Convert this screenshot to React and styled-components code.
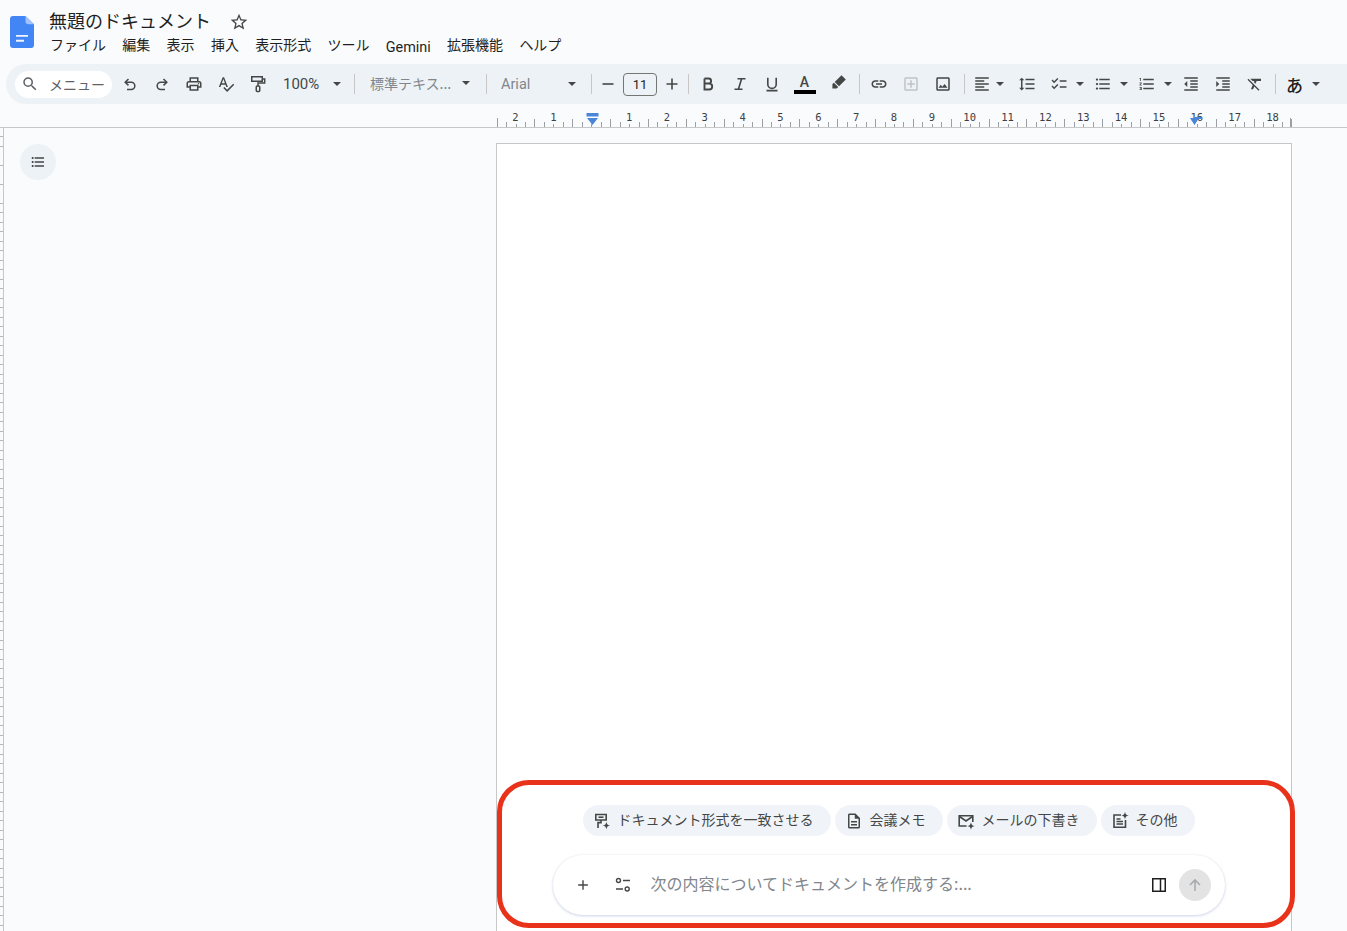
import React from 'react';
import styled, { createGlobalStyle } from 'styled-components';
import {
  MdSearch, MdStarBorder, MdOutlinePrint, MdSpellcheck,
  MdOutlineAddBox, MdOutlineImage, MdFormatAlignLeft, MdFormatLineSpacing, MdOutlineChecklist,
  MdFormatListBulleted, MdFormatListNumbered, MdFormatIndentDecrease, MdFormatIndentIncrease,
  MdFormatClear, MdOutlineDescription, MdOutlineLink,
} from 'react-icons/md';

const JP = `"Noto Sans CJK JP", "Noto Sans", sans-serif`;
const INK = '#444746';

const GlobalStyle = createGlobalStyle`
  html, body { margin: 0; padding: 0; height: 100%; overflow: hidden; }
  body { background: #f9fbfd; font-family: Roboto, ${JP}; color: #1f1f1f; }
`;

const Shell = styled.div`
  height: 931px;
  display: flex;
  flex-direction: column;
  overflow: hidden;
`;

const Header = styled.header`
  height: 64px;
  display: flex;
  padding-left: 10px;
  box-sizing: border-box;
`;

const LogoBox = styled.div`
  width: 27px;
  padding-top: 16px;
`;

const TitleBlock = styled.div`
  margin-left: 12px;
  padding-top: 7px;
`;

const TitleRow = styled.div`
  display: flex;
  align-items: center;
  height: 26px;
  color: ${INK};
  svg { margin-top: 3px; }
`;

const Title = styled.span`
  font-family: ${JP};
  font-size: 18px;
  line-height: 26px;
  color: #1f1f1f;
  margin-right: 18px;
`;

const MenuBar = styled.nav`
  display: flex;
  gap: 16.3px;
  padding-left: 1px;
`;

const MenuItem = styled.span`
  font-family: ${(p) => (p.$latin ? 'Roboto, sans-serif' : JP)};
  font-size: ${(p) => (p.$latin ? '14.4px' : '14px')};
  line-height: 22px;
  color: #1f1f1f;
  position: relative;
  top: ${(p) => (p.$latin ? '4px' : '0')};
`;

const Toolbar = styled.div`
  height: 40px;
  margin-left: 6px;
  border-radius: 20px 0 0 20px;
  background: #edf2f6;
  display: flex;
  align-items: center;
  padding-left: 9px;
  color: ${INK};
`;

const SearchPill = styled.div`
  width: 97px;
  height: 27px;
  border-radius: 14px;
  background: #fff;
  display: flex;
  align-items: center;
  padding: 0 0 1px 6px;
  box-sizing: border-box;
  margin-right: 2px;
  font-family: ${JP};
  font-size: 14px;
  color: #5f6368;
  gap: 10px;
  flex: none;
  white-space: nowrap;
  overflow: hidden;
  svg { margin-top: 1px; }
`;

const ToolButton = styled.div`
  width: ${(p) => p.$w || 32}px;
  height: 28px;
  flex: none;
  box-sizing: border-box;
  padding-bottom: ${(p) => p.$pb || 0}px;
  display: flex;
  align-items: center;
  justify-content: center;
  color: ${(p) => (p.$muted ? '#c0c4c7' : INK)};
`;

const Caret = styled.span`
  width: 0;
  height: 0;
  border-left: 4.5px solid transparent;
  border-right: 4.5px solid transparent;
  border-top: 4.5px solid ${INK};
  flex: none;
`;

const Separator = styled.span`
  width: 1px;
  height: 20px;
  background: #c7c7c7;
  flex: none;
  margin-left: ${(p) => p.$ml ?? 0}px;
  margin-right: ${(p) => p.$mr ?? 0}px;
`;

const SelectBox = styled.div`
  width: ${(p) => p.$w}px;
  height: 28px;
  flex: none;
  display: flex;
  align-items: center;
  justify-content: space-between;
  box-sizing: border-box;
  padding: 0 ${(p) => p.$pr ?? 8}px ${(p) => (p.$jp ? 2 : 0)}px ${(p) => p.$pl ?? 8}px;
  font-family: ${(p) => (p.$jp ? JP : 'Roboto, sans-serif')};
  font-size: ${(p) => p.$fs || 14}px;
  white-space: nowrap;
  color: ${(p) => (p.$muted ? '#80868b' : INK)};
`;

const FontSize = styled.div`
  width: 34px;
  height: 23px;
  flex: none;
  box-sizing: border-box;
  border: 1px solid #747775;
  border-radius: 4px;
  font-size: 13px;
  display: flex;
  align-items: center;
  justify-content: center;
  color: #1f1f1f;
`;

const MiniGroup = styled.div`
  display: flex;
  align-items: center;
  width: 44px;
  box-sizing: border-box;
  padding-left: 7px;
  gap: ${(p) => p.$gap ?? 7.5}px;
  flex: none;
`;

const ColorA = styled.div`
  width: 33px;
  height: 28px;
  margin-right: 2px;
  padding-top: 4px;
  box-sizing: border-box;
  flex: none;
  display: flex;
  flex-direction: column;
  align-items: center;
  font-size: 14px;
  line-height: 16px;
  font-weight: 500;
  color: ${INK};
  span:last-child {
    width: 22px;
    height: 4px;
    background: #000;
  }
`;

const Kana = styled.span`
  font-family: ${JP};
  font-size: 17px;
  font-weight: 500;
  width: 18px;
  color: #1f1f1f;
`;

const RulerBar = styled.div`
  height: 24px;
  flex: none;
  border-bottom: 1px solid #c7c7c7;
  box-sizing: border-box;
  svg { display: block; }
`;

const Workspace = styled.main`
  flex: 1;
  display: flex;
  min-height: 0;
`;

const SideRuler = styled.div`
  width: 3px;
  flex: none;
  border-right: 1px solid #c7c7c7;
  background: repeating-linear-gradient(to bottom, transparent 0 8.5px, #b8b8b8 8.5px 9.5px);
`;

const Sidebar = styled.aside`
  width: 492px;
  flex: none;
  padding: 16px 0 0 16px;
  box-sizing: border-box;
`;

const OutlineButton = styled.div`
  width: 36px;
  height: 36px;
  border-radius: 50%;
  background: #edf2f6;
  display: flex;
  align-items: center;
  justify-content: center;
  color: ${INK};
`;

const PageWrap = styled.div`
  padding-top: 15px;
  display: flex;
`;

const Page = styled.section`
  width: 796px;
  height: 800px;
  box-sizing: border-box;
  background: #fff;
  border: 1px solid #c7c7c7;
  border-bottom: none;
  display: flex;
  flex-direction: column;
  align-items: center;
  position: relative;
  padding: 661px 11px 0 0;
`;

const Annotation = styled.div`
  position: absolute;
  left: 0;
  top: 636px;
  width: 798px;
  height: 148px;
  box-sizing: border-box;
  border: 5px solid #e8321a;
  border-radius: 32px;
  pointer-events: none;
`;

const ChipRow = styled.div`
  display: flex;
  gap: 4px;
  height: 31px;
`;

const Chip = styled.div`
  height: 31px;
  border-radius: 16px;
  background: #f0f4f9;
  display: flex;
  align-items: center;
  box-sizing: border-box;
  padding: 0 17px 3px 10px;
  gap: 7px;
  font-family: ${JP};
  font-size: 14px;
  color: ${INK};
  svg { margin-top: 4px; }
`;

const Composer = styled.div`
  width: 672px;
  height: 60px;
  margin-top: 19px;
  border-radius: 30px;
  background: #fff;
  box-shadow: 0 1px 3px rgba(90, 110, 180, 0.28), 0 0 2px rgba(60, 64, 67, 0.08);
  display: flex;
  align-items: center;
  box-sizing: border-box;
  padding: 0 14px 0 18px;
  color: ${INK};
`;

const ComposerIcon = styled.div`
  width: 24px;
  height: 24px;
  display: flex;
  align-items: center;
  justify-content: center;
  flex: none;
  margin-right: ${(p) => p.$mr || 0}px;
`;

const Placeholder = styled.div`
  flex: 1;
  font-family: ${JP};
  font-size: 16px;
  padding-bottom: 5px;
  color: #80868b;
`;

const SendButton = styled.div`
  width: 32px;
  height: 32px;
  border-radius: 50%;
  background: #e3e3e3;
  display: flex;
  align-items: center;
  justify-content: center;
  margin-left: 8px;
  flex: none;
`;

const DocsLogo = () => (
  <svg width="24" height="32" viewBox="0 0 24 33" preserveAspectRatio="none">
    <path d="M3 0h12.5L24 8.5V30a3 3 0 0 1-3 3H3a3 3 0 0 1-3-3V3a3 3 0 0 1 3-3z" fill="#4285f4" />
    <path d="M15.5 0L24 8.5h-6a2.5 2.5 0 0 1-2.5-2.5z" fill="#a1c2fa" />
    <path d="M6 19.5h12v2H6zM6 24.5h8v2H6z" fill="#f1f5fe" />
  </svg>
);

const UndoIcon = ({ flip }) => (
  <svg width="18" height="18" viewBox="0 0 18 18" fill="none" stroke="currentColor" strokeWidth="1.5"
    style={flip ? { transform: 'scaleX(-1)' } : undefined}>
    <path d="M7.5 4L4.2 7.2l3.3 3.2" />
    <path d="M4.5 7.2h5.7a3.6 3.6 0 0 1 0 7.3H6" />
  </svg>
);

const PaintIcon = () => (
  <svg width="18" height="18" viewBox="0 0 18 18" fill="none" stroke="currentColor" strokeWidth="1.5">
    <rect x="2.75" y="1.75" width="10.5" height="4.5" />
    <path d="M13.5 4h2.2v4H9v3" />
    <rect x="7.25" y="11" width="3.5" height="5.5" rx="1" />
  </svg>
);

const BoldIcon = () => (
  <svg width="18" height="18" viewBox="0 0 18 18" fill="none" stroke="currentColor" strokeWidth="1.9">
    <path d="M5.5 3.5v11h4.7a3 3 0 0 0 0-6H5.5M9.6 8.5a2.5 2.5 0 0 0 0-5H5.5" />
  </svg>
);

const ItalicIcon = () => (
  <svg width="18" height="18" viewBox="0 0 18 18" fill="none" stroke="currentColor" strokeWidth="1.6">
    <path d="M6.5 3.8h8M3.5 14.2h8M10.6 3.8L7.4 14.2" />
  </svg>
);

const UnderlineIcon = () => (
  <svg width="18" height="18" viewBox="0 0 18 18" fill="none" stroke="currentColor" strokeWidth="1.6">
    <path d="M4.8 2.8v6.4a4.2 4.2 0 0 0 8.4 0V2.8M3.5 15.6h11" />
  </svg>
);

const HighlightIcon = () => (
  <svg width="18" height="18" viewBox="0 0 18 18" fill="currentColor">
    <path d="M11.5 2.2l4.3 4.3-6.8 6.8-4.3-4.3zM3.9 9.8l4.3 4.3-1.6 1.4H2.4V11z" />
  </svg>
);

const TuneIcon = () => (
  <svg width="18" height="18" viewBox="0 0 18 18" fill="none" stroke="currentColor" strokeWidth="1.4">
    <circle cx="4.5" cy="4.5" r="2" />
    <path d="M9 4.5h7M2 13h7" />
    <circle cx="13.2" cy="13" r="2" />
  </svg>
);

const PanelIcon = () => (
  <svg width="18" height="18" viewBox="0 0 18 18" fill="none" stroke="#1f1f1f" strokeWidth="1.5">
    <rect x="2.75" y="2.75" width="12.5" height="12.5" />
    <path d="M10.5 3v12" />
  </svg>
);

const ArrowUp = () => (
  <svg width="16" height="16" viewBox="0 0 16 16" fill="none" stroke="#a8abad" strokeWidth="1.6">
    <path d="M8 14V3M3 8l5-5 5 5" />
  </svg>
);

const PlusIcon = ({ size = 16, width = 1.6 }) => (
  <svg width={size} height={size} viewBox="0 0 16 16" fill="none" stroke="currentColor" strokeWidth={width}>
    <path d="M8 2.5v11M2.5 8h11" />
  </svg>
);

const MinusIcon = () => (
  <svg width="16" height="16" viewBox="0 0 16 16" fill="none" stroke="currentColor" strokeWidth="1.6">
    <path d="M2.5 8h11" />
  </svg>
);

const Sparkle = ({ x, y }) => (
  <path transform={`translate(${x} ${y})`} d="M0-3.8C.4-1.3 1.3-.4 3.8 0 1.3.4.4 1.3 0 3.8-.4 1.3-1.3.4-3.8 0-1.3-.4-.4-1.3 0-3.8z" fill="currentColor" stroke="none" />
);

const MatchFormatIcon = () => (
  <svg width="18" height="18" viewBox="0 0 18 18" fill="none" stroke="currentColor" strokeWidth="1.6">
    <path d="M2.8 2.5h10.4v5.5H2.8zM8 8v2.6H5v5.4" />
    <path d="M5.5 5.2h5" />
    <Sparkle x={13.4} y={13.6} />
  </svg>
);

const MailIcon = () => (
  <svg width="18" height="18" viewBox="0 0 18 18" fill="none" stroke="currentColor" strokeWidth="1.6">
    <path d="M9.5 14H2.2V3.8h13.6V10" />
    <path d="M2.5 4.5L9 9l6.5-4.5" />
    <Sparkle x={14} y={14} />
  </svg>
);

const MoreDocIcon = () => (
  <svg width="18" height="18" viewBox="0 0 18 18" fill="none" stroke="currentColor" strokeWidth="1.6">
    <path d="M10 3H3v12.2h11.5V8" />
    <path d="M5.5 7h4M5.5 9.5h6.5M5.5 12h6.5" />
    <Sparkle x={14} y={3.6} />
  </svg>
);

const RULER_START = 497;
const RULER_END = 1291;
const ZERO = 591.2;
const CM = 37.85;

const rulerLabels = [
  { n: 2, x: ZERO - 2 * CM }, { n: 1, x: ZERO - CM },
  ...Array.from({ length: 18 }, (_, i) => ({ n: i + 1, x: ZERO + (i + 1) * CM })),
];

const tickPositions = [];
for (let i = -10; i <= 74; i++) {
  const x = ZERO + (i * CM) / 4;
  if (x >= RULER_START - 1 && x <= RULER_END + 1) {
    tickPositions.push({ x, top: i % 4 === 0 ? 20 : i % 2 === 0 ? 15 : 18 });
  }
}

const RulerDrawing = () => (
  <svg width="1347" height="23" viewBox="0 0 1347 23">
    {tickPositions.map((t) => (
      <path key={t.x} d={`M${Math.round(t.x) + 0.5} ${t.top}V23`} stroke="#9aa0a6" strokeWidth="1" />
    ))}
    <path d={`M${RULER_START + 0.5} 14V23M${RULER_END - 0.5} 14V23`} stroke="#9aa0a6" />
    {rulerLabels.map((l) => (
      <text key={l.n + '-' + l.x} x={l.x} y="17" textAnchor="middle" fontFamily="DejaVu Sans Mono, Liberation Mono, monospace" fontSize="10.5" fill="#3c4043">{l.n}</text>
    ))}
    <path d="M586.5 9h12v3.5h-12zM587 14h11l-5.5 7z" fill="#4a86d8" />
    <path d="M1190 14h9l-4.5 7zM1195 13h6v2h-6z" fill="#4a86d8" />
  </svg>
);

const Icon18 = { size: 18 };

export default function App() {
  const menus = ['ファイル', '編集', '表示', '挿入', '表示形式', 'ツール', 'Gemini', '拡張機能', 'ヘルプ'];
  return (
    <Shell>
      <GlobalStyle />
      <Header>
        <LogoBox>
          <DocsLogo />
        </LogoBox>
        <TitleBlock>
          <TitleRow>
            <Title>無題のドキュメント</Title>
            <MdStarBorder size={20} />
          </TitleRow>
          <MenuBar>
            {menus.map((m) => (
              <MenuItem key={m} $latin={m === 'Gemini'}>{m}</MenuItem>
            ))}
          </MenuBar>
        </TitleBlock>
      </Header>

      <Toolbar>
        <SearchPill>
          <MdSearch size={18} />
          メニュー
        </SearchPill>
        <ToolButton><UndoIcon /></ToolButton>
        <ToolButton><UndoIcon flip /></ToolButton>
        <ToolButton><MdOutlinePrint {...Icon18} /></ToolButton>
        <ToolButton><MdSpellcheck {...Icon18} /></ToolButton>
        <ToolButton><PaintIcon /></ToolButton>
        <SelectBox $w={80} $fs={15} $pl={9} $pr={13}>100%<Caret /></SelectBox>
        <Separator />
        <SelectBox $w={127} $jp $muted $pl={15} $pr={12}>標準テキス...<Caret /></SelectBox>
        <Separator $ml={4} $mr={4} />
        <SelectBox $w={100} $fs={14.5} $muted $pl={10} $pr={15}>Arial<Caret /></SelectBox>
        <Separator />
        <ToolButton $w={31}><MinusIcon /></ToolButton>
        <FontSize>11</FontSize>
        <ToolButton $w={30}><PlusIcon /></ToolButton>
        <Separator $ml={1} $mr={3} />
        <ToolButton><BoldIcon /></ToolButton>
        <ToolButton><ItalicIcon /></ToolButton>
        <ToolButton><UnderlineIcon /></ToolButton>
        <ColorA><span>A</span><span /></ColorA>
        <ToolButton $pb={5}><HighlightIcon /></ToolButton>
        <Separator $ml={4} $mr={3} />
        <ToolButton><MdOutlineLink {...Icon18} /></ToolButton>
        <ToolButton $muted><MdOutlineAddBox {...Icon18} /></ToolButton>
        <ToolButton><MdOutlineImage {...Icon18} /></ToolButton>
        <Separator $ml={5} $mr={1} />
        <MiniGroup $gap={4.5}><MdFormatAlignLeft {...Icon18} /><Caret /></MiniGroup>
        <ToolButton $w={33}><MdFormatLineSpacing {...Icon18} /></ToolButton>
        <MiniGroup><MdOutlineChecklist {...Icon18} /><Caret /></MiniGroup>
        <MiniGroup><MdFormatListBulleted {...Icon18} /><Caret /></MiniGroup>
        <MiniGroup><MdFormatListNumbered {...Icon18} /><Caret /></MiniGroup>
        <ToolButton><MdFormatIndentDecrease {...Icon18} /></ToolButton>
        <ToolButton><MdFormatIndentIncrease {...Icon18} /></ToolButton>
        <ToolButton><MdFormatClear {...Icon18} /></ToolButton>
        <Separator $ml={4} $mr={3} />
        <MiniGroup><Kana>あ</Kana><Caret /></MiniGroup>
      </Toolbar>

      <RulerBar>
        <RulerDrawing />
      </RulerBar>

      <Workspace>
        <SideRuler />
        <Sidebar>
          <OutlineButton><MdFormatListBulleted size={16} /></OutlineButton>
        </Sidebar>
        <PageWrap>
          <Page>
            <ChipRow>
              <Chip><MatchFormatIcon />ドキュメント形式を一致させる</Chip>
              <Chip><MdOutlineDescription size={18} />会議メモ</Chip>
              <Chip><MailIcon />メールの下書き</Chip>
              <Chip><MoreDocIcon />その他</Chip>
            </ChipRow>
            <Composer>
              <ComposerIcon $mr={16}><PlusIcon size={14} /></ComposerIcon>
              <ComposerIcon $mr={16}><TuneIcon /></ComposerIcon>
              <Placeholder>次の内容についてドキュメントを作成する:...</Placeholder>
              <ComposerIcon><PanelIcon /></ComposerIcon>
              <SendButton><ArrowUp /></SendButton>
            </Composer>
            <Annotation />
          </Page>
        </PageWrap>
      </Workspace>
    </Shell>
  );
}
